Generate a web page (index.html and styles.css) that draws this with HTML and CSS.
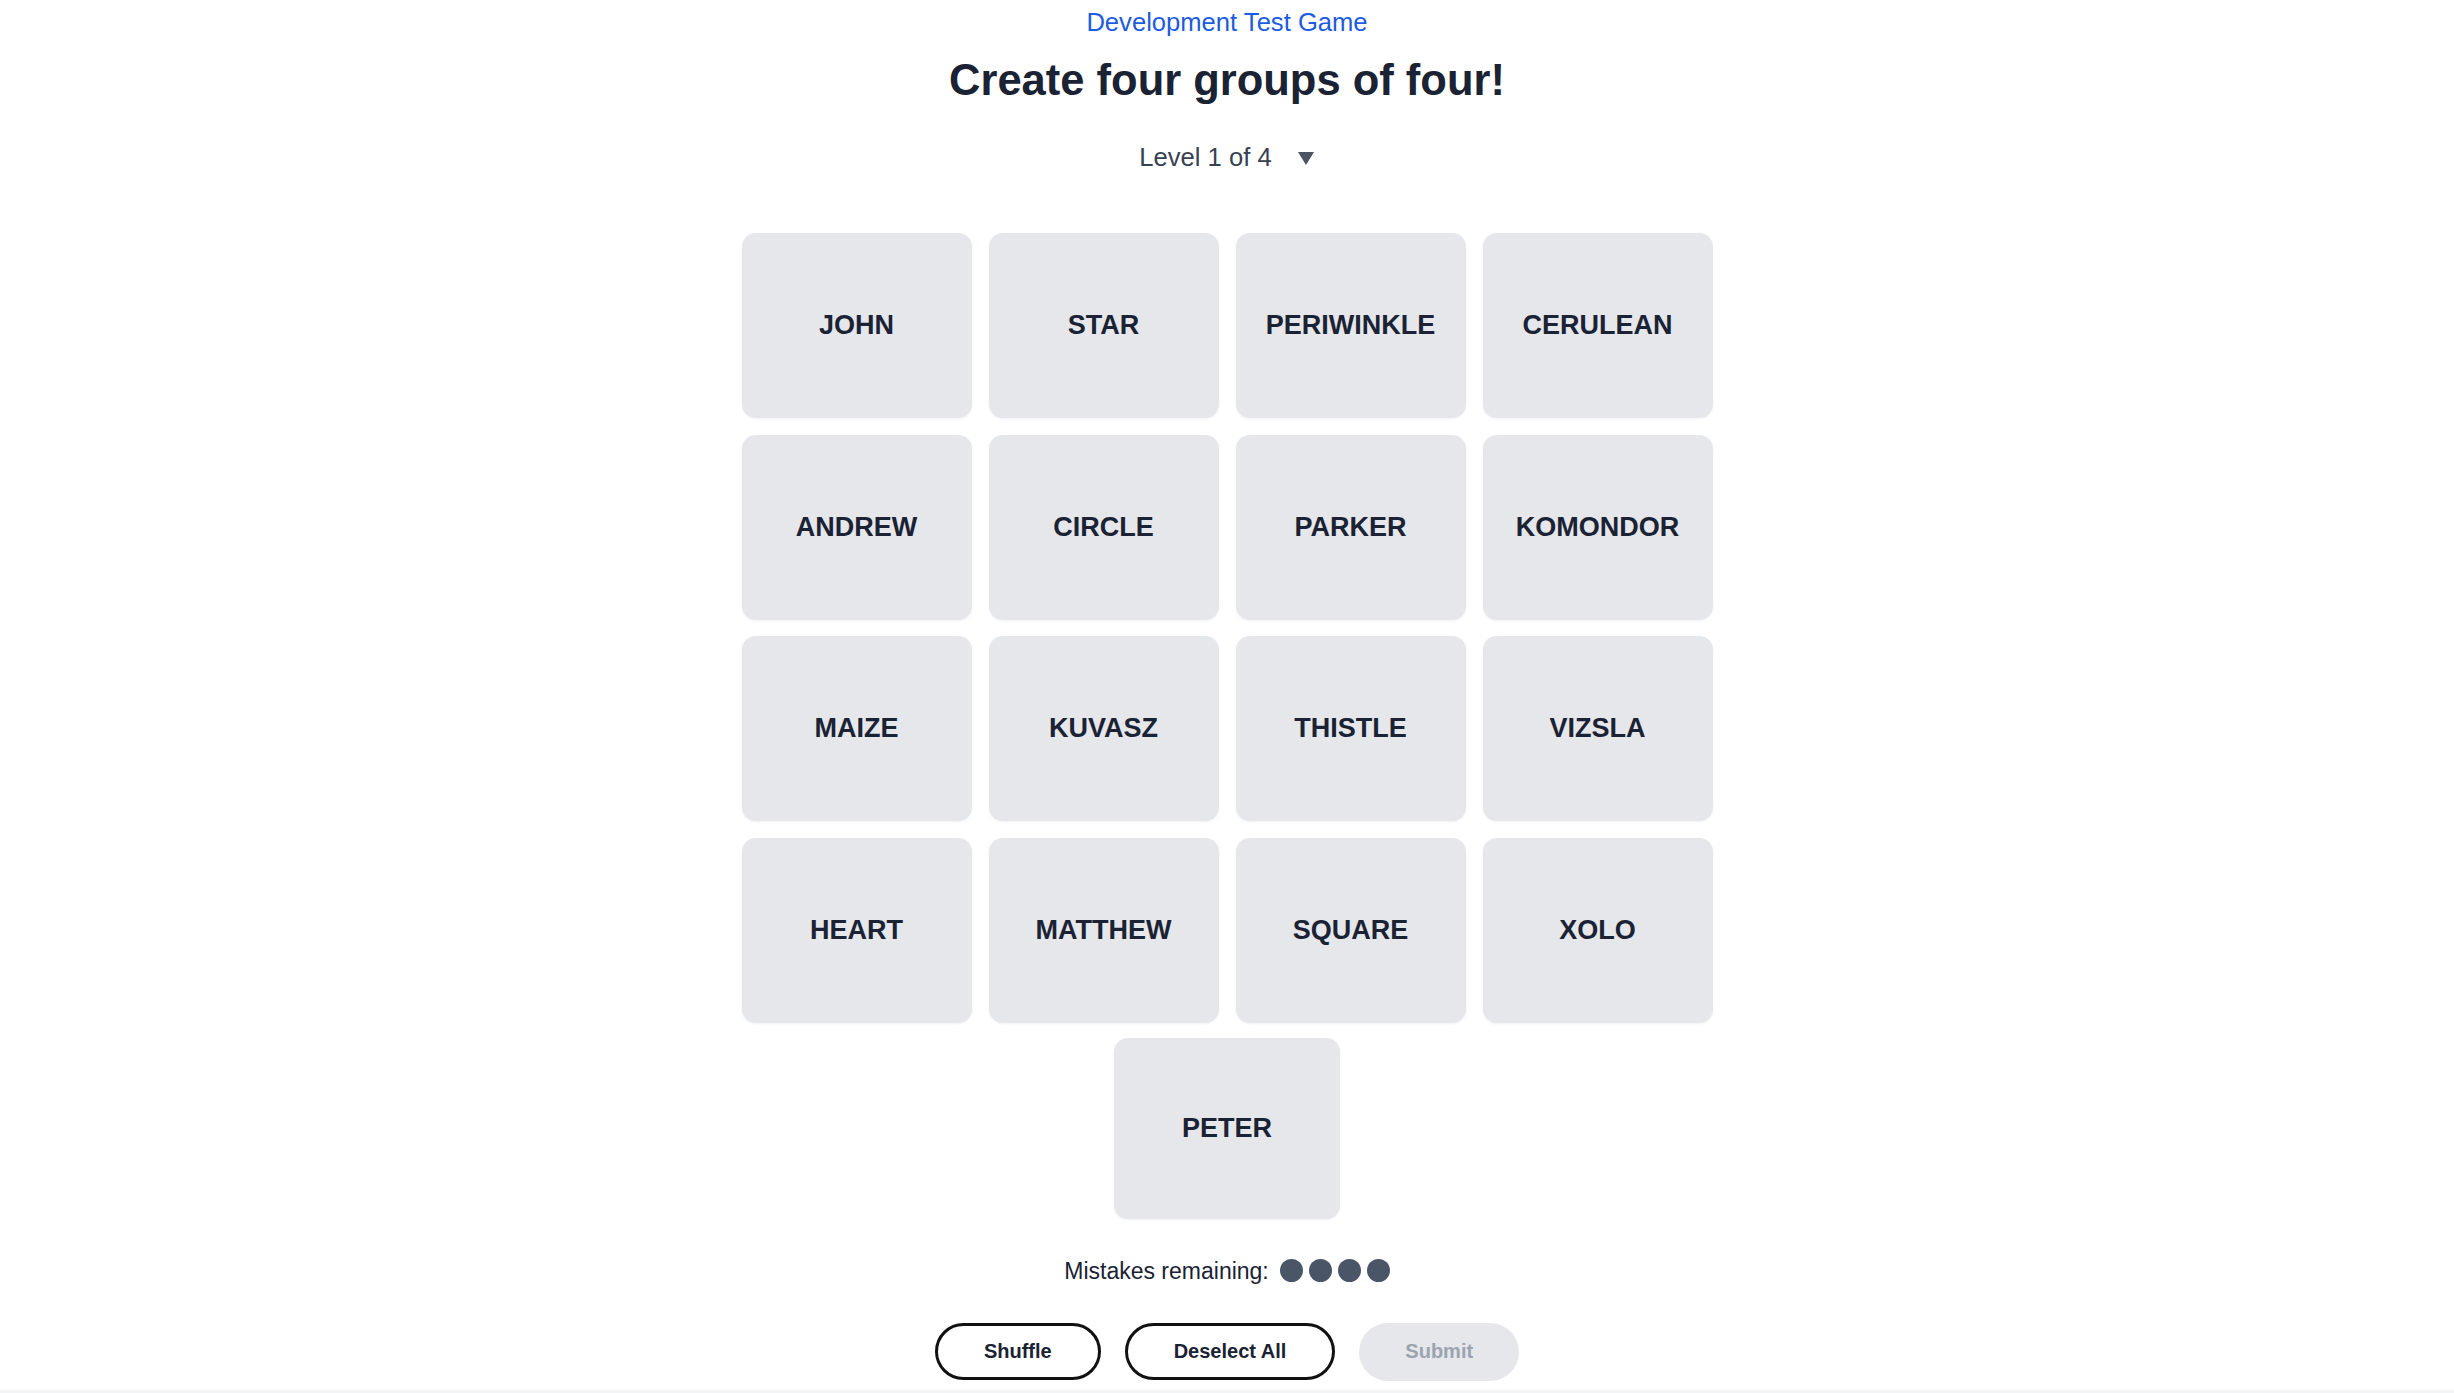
FILE: index.html
```html
<!DOCTYPE html>
<html lang="en">
<head>
<meta charset="utf-8">
<title>Create four groups of four!</title>
<link rel="stylesheet" href="styles.css">
</head>
<body>
<main class="page">
  <a class="game-link" href="#">Development Test Game</a>
  <h1 class="title">Create four groups of four!</h1>
  <div class="level">
    <span>Level 1 of 4</span>
    <svg class="caret" width="18" height="14" viewBox="0 0 18 14"><polygon points="1,1 17,1 9,14" fill="#4b5563"/></svg>
  </div>
  <div class="grid">
    <div class="tile">JOHN</div>
    <div class="tile">STAR</div>
    <div class="tile">PERIWINKLE</div>
    <div class="tile">CERULEAN</div>
    <div class="tile">ANDREW</div>
    <div class="tile">CIRCLE</div>
    <div class="tile">PARKER</div>
    <div class="tile">KOMONDOR</div>
    <div class="tile">MAIZE</div>
    <div class="tile">KUVASZ</div>
    <div class="tile">THISTLE</div>
    <div class="tile">VIZSLA</div>
    <div class="tile">HEART</div>
    <div class="tile">MATTHEW</div>
    <div class="tile">SQUARE</div>
    <div class="tile">XOLO</div>
  </div>
  <div class="extra-row">
    <div class="tile tile-small">PETER</div>
  </div>
  <div class="mistakes">
    <span>Mistakes remaining:</span>
    <span class="dots"><i class="dot"></i><i class="dot"></i><i class="dot"></i><i class="dot"></i></span>
  </div>
  <div class="actions">
    <button class="btn btn-outline">Shuffle</button>
    <button class="btn btn-outline">Deselect All</button>
    <button class="btn btn-disabled">Submit</button>
  </div>
  <div class="bottom-strip"></div>
</main>
</body>
</html>
```
FILE: styles.css
```css
html, body {
  margin: 0;
  padding: 0;
  background: #ffffff;
  overflow: hidden;
}
body {
  font-family: "Liberation Sans", Arial, sans-serif;
  color: #1a2233;
}
.page {
  display: flex;
  flex-direction: column;
  align-items: center;
  padding-top: 4px;
}
.game-link {
  font-size: 25.6px;
  line-height: 36px;
  color: #1d5be0;
  text-decoration: none;
}
.title {
  margin: 14px 0 0;
  font-size: 43.5px;
  line-height: 52px;
  font-weight: 700;
  color: #1a2233;
}
.level {
  margin-top: 33px;
  display: flex;
  align-items: center;
  gap: 25px;
  font-size: 25.6px;
  line-height: 36px;
  color: #374151;
}
.caret {
  display: block;
  margin-top: 2px;
}
.grid {
  margin-top: 58px;
  display: grid;
  grid-template-columns: repeat(4, 230px);
  grid-auto-rows: 185px;
  column-gap: 17px;
  row-gap: 16.5px;
}
.tile {
  background: #e5e7eb;
  border-radius: 14px;
  box-shadow: 0 1px 3px rgba(0, 0, 0, 0.06);
  display: flex;
  align-items: center;
  justify-content: center;
  font-size: 27px;
  font-weight: 700;
  color: #1a2233;
}
.extra-row {
  margin-top: 15px;
  display: flex;
  justify-content: center;
}
.tile-small {
  width: 226px;
  height: 181px;
}
.mistakes {
  margin-top: 36px;
  display: flex;
  align-items: center;
  font-size: 23px;
  line-height: 32px;
  color: #1a2233;
}
.dots {
  display: flex;
  gap: 6px;
  margin-left: 11px;
}
.dot {
  display: block;
  width: 23px;
  height: 23px;
  border-radius: 50%;
  background: #4a5568;
}
.actions {
  margin-top: 36px;
  display: flex;
  gap: 24px;
}
.btn {
  height: 57px;
  padding: 0 46px;
  border-radius: 999px;
  font-family: "Liberation Sans", Arial, sans-serif;
  font-size: 20px;
  font-weight: 700;
  display: flex;
  align-items: center;
  justify-content: center;
}
.btn-outline {
  background: #ffffff;
  border: 3px solid #111111;
  color: #1a2233;
}
.btn-disabled {
  background: #e5e7eb;
  border: 0;
  color: #9ca3af;
  height: 58px;
}
.bottom-strip {
  align-self: stretch;
  margin-top: 9px;
  height: 10px;
  background: #f3f4f6;
}
```
